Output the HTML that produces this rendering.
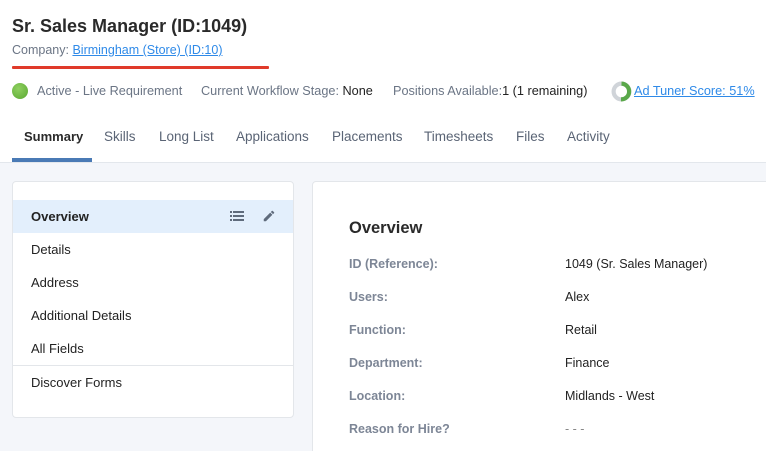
<!DOCTYPE html>
<html><head><meta charset="utf-8"><style>
*{margin:0;padding:0;box-sizing:border-box}
html,body{width:766px;height:451px;overflow:hidden}
body{background:#fff;font-family:"Liberation Sans",sans-serif;position:relative;color:#222}
.a{position:absolute;white-space:nowrap}
.g{color:#6b7585}
a{color:#2f8ae8;text-decoration:underline}
.tab{position:absolute;top:128px;font-size:13.5px;line-height:18px;color:#5a6475}
.nav{position:absolute;left:31px;font-size:13px;color:#222}
.lbl{position:absolute;left:349px;font-size:12.5px;color:#7d8696;font-weight:bold}
.val{position:absolute;left:565px;font-size:12.5px;color:#222}
</style></head><body>
<div class="a" style="left:12px;top:16px;font-size:18px;font-weight:bold;color:#2a2a2a">Sr. Sales Manager (ID:1049)</div>
<div class="a g" style="left:12px;top:43px;font-size:12.5px">Company: <a>Birmingham (Store) (ID:10)</a></div>
<div class="a" style="left:12px;top:66px;width:257px;height:3px;background:#e03a2a;border-radius:1px"></div>
<div class="a" style="left:12px;top:83px;width:16px;height:16px;border-radius:50%;background:radial-gradient(circle at 40% 35%,#8fd060,#5aa832)"></div>
<div class="a g" style="left:37px;top:84px;font-size:12.7px">Active - Live Requirement</div>
<div class="a g" style="left:201px;top:84px;font-size:12.7px">Current Workflow Stage: <span style="color:#222">None</span></div>
<div class="a g" style="left:393px;top:84px;font-size:12.7px">Positions Available:<span style="color:#222">1 (1 remaining)</span></div>
<svg class="a" style="left:611px;top:81px" width="21" height="21" viewBox="0 0 20 20"><circle cx="10" cy="10" r="7.5" fill="none" stroke="#d0d4d9" stroke-width="4"/><path d="M10 2.5 A7.5 7.5 0 0 1 9.5 17.5" fill="none" stroke="#5aa84a" stroke-width="4"/></svg>
<div class="a" style="left:634px;top:84px;font-size:12.7px"><a>Ad Tuner Score: 51%</a></div>
<div class="tab" style="left:24px;color:#2a2a2a;font-weight:bold;font-size:13px">Summary</div>
<div class="tab" style="left:104px">Skills</div>
<div class="tab" style="left:159px">Long List</div>
<div class="tab" style="left:236px">Applications</div>
<div class="tab" style="left:332px">Placements</div>
<div class="tab" style="left:424px">Timesheets</div>
<div class="tab" style="left:516px">Files</div>
<div class="tab" style="left:567px">Activity</div>
<div class="a" style="left:0;top:162px;width:766px;height:289px;background:#f4f6fa;border-top:1px solid #e3e7ec"></div>
<div class="a" style="left:12px;top:158px;width:80px;height:4px;background:#4a7ab5"></div>
<div class="a" style="left:12px;top:181px;width:282px;height:237px;background:#fff;border:1px solid #e3e6ea;border-radius:4px"></div>
<div class="a" style="left:13px;top:200px;width:280px;height:33px;background:#e3effc"></div>
<div class="nav" style="top:209px;font-weight:bold">Overview</div>
<svg class="a" style="left:230px;top:210px" width="15" height="12" viewBox="0 0 15 12" fill="#5f6b7c"><rect x="0" y="1" width="2" height="2"/><rect x="3" y="1" width="11" height="2"/><rect x="0" y="5" width="2" height="2"/><rect x="3" y="5" width="11" height="2"/><rect x="0" y="9" width="2" height="2"/><rect x="3" y="9" width="11" height="2"/></svg>
<svg class="a" style="left:262px;top:209px" width="14" height="14" viewBox="0 0 24 24" fill="#5f6b7c"><path d="M3 17.25V21h3.75L17.81 9.94l-3.75-3.75L3 17.25zM20.71 7.04a1 1 0 0 0 0-1.41l-2.34-2.34a1 1 0 0 0-1.41 0l-1.83 1.83 3.75 3.75 1.83-1.83z"/></svg>
<div class="nav" style="top:242px">Details</div>
<div class="nav" style="top:275px">Address</div>
<div class="nav" style="top:308px">Additional Details</div>
<div class="nav" style="top:341px">All Fields</div>
<div class="a" style="left:13px;top:365px;width:280px;height:1px;background:#e3e6ea"></div>
<div class="nav" style="top:375px">Discover Forms</div>
<div class="a" style="left:312px;top:181px;width:470px;height:280px;background:#fff;border:1px solid #e3e6ea;border-radius:4px"></div>
<div class="a" style="left:349px;top:219px;font-size:16.5px;font-weight:bold;color:#2a2a2a">Overview</div>
<div class="lbl" style="top:257px">ID (Reference):</div><div class="val" style="top:257px">1049 (Sr. Sales Manager)</div>
<div class="lbl" style="top:290px">Users:</div><div class="val" style="top:290px">Alex</div>
<div class="lbl" style="top:323px">Function:</div><div class="val" style="top:323px">Retail</div>
<div class="lbl" style="top:356px">Department:</div><div class="val" style="top:356px">Finance</div>
<div class="lbl" style="top:389px">Location:</div><div class="val" style="top:389px">Midlands - West</div>
<div class="lbl" style="top:422px">Reason for Hire?</div><div class="val" style="top:422px;color:#888">- - -</div>
</body></html>
